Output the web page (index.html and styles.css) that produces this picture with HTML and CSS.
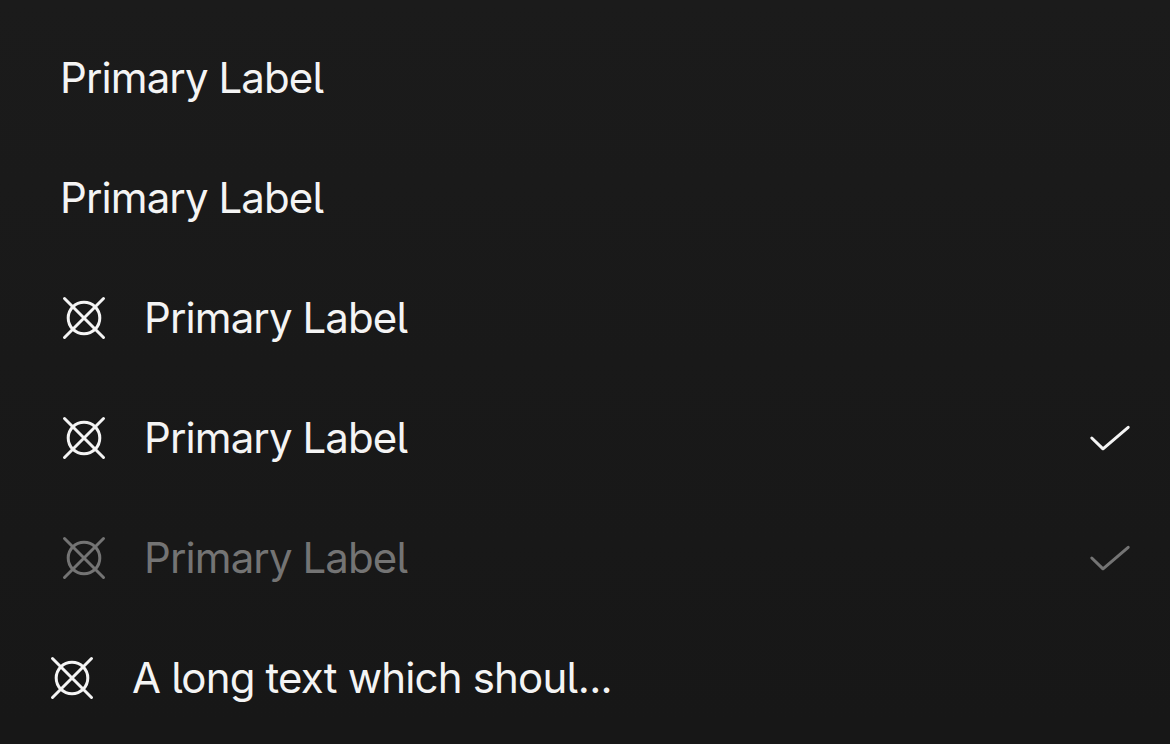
FILE: index.html
```html
<!DOCTYPE html>
<html lang="en">
<head>
<meta charset="utf-8">
<title>Menu</title>
<link rel="stylesheet" href="styles.css">
</head>
<body>
<svg class="defs" width="0" height="0">
  <symbol id="target" viewBox="0 0 48 48"><circle cx="24" cy="24" r="15.8"/><path d="M4.500 4.500l39 39M43.500 4.500l-39 39"/></symbol>
  <symbol id="check" viewBox="0 0 48 48"><path d="M5.800 24L17 34.800L42.200 13.300"/></symbol>
</svg>
<ul class="menu">
  <li class="item"><span class="label">Primary Label</span></li>
  <li class="item"><span class="label">Primary Label</span></li>
  <li class="item"><svg class="icon"><use href="#target"/></svg><span class="label">Primary Label</span></li>
  <li class="item"><svg class="icon"><use href="#target"/></svg><span class="label">Primary Label</span><svg class="icon check"><use href="#check"/></svg></li>
  <li class="item disabled"><svg class="icon"><use href="#target"/></svg><span class="label">Primary Label</span><svg class="icon check"><use href="#check"/></svg></li>
  <li class="item compact"><svg class="icon"><use href="#target"/></svg><span class="label">A long text which shoul...</span></li>
</ul>
</body>
</html>
```
FILE: styles.css
```css
body {
  margin: 0;
  height: 744px;
  overflow: hidden;
  background: linear-gradient(#1b1b1b 3px, #171717 723px);
  color: #f4f4f4;
  font-family: Inter, sans-serif;
}
.defs { position: absolute; }
.menu {
  margin: 0;
  padding: 18px 0 0;
  list-style: none;
}
.item {
  display: flex;
  align-items: center;
  height: 120px;
  box-sizing: border-box;
  padding: 0 36px 0 60px;
}
.icon {
  flex: none;
  width: 48px;
  height: 48px;
  margin-right: 36px;
  fill: none;
  stroke: currentColor;
  stroke-width: 3;
  stroke-linecap: round;
  stroke-linejoin: round;
}
.check { margin: 0 0 0 auto; }
.label {
  font-size: 42px;
  line-height: 60px;
  letter-spacing: -0.9px;
  font-feature-settings: "cv05", "ss03";
  white-space: nowrap;
}
.disabled { color: #747474; }
.compact { padding-left: 48px; }
.compact .label { letter-spacing: -0.82px; }
```
